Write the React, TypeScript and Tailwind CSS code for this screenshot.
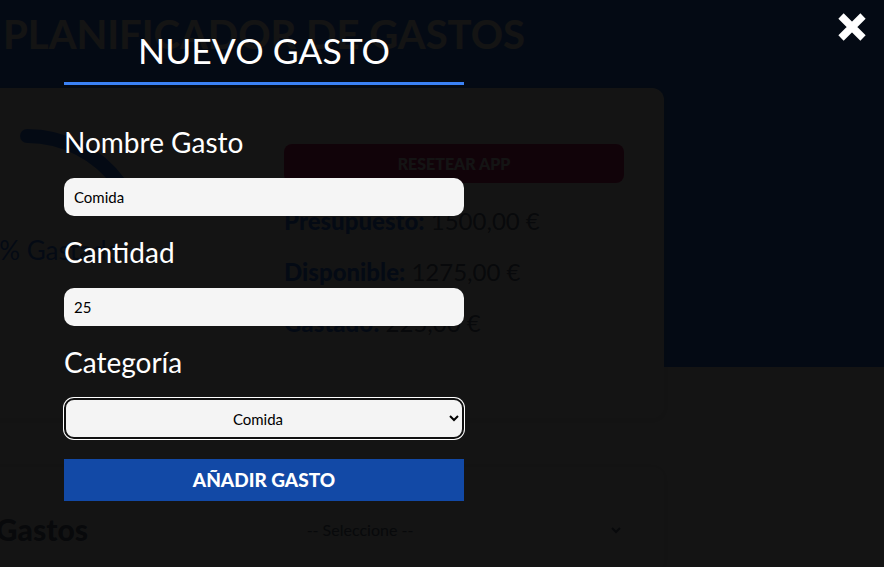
const resumen = [
  { label: 'Presupuesto:', value: '1500,00 €' },
  { label: 'Disponible:', value: '1275,00 €' },
  { label: 'Gastado:', value: '225,00 €' },
];

function Progreso({ porcentaje }: { porcentaje: number }) {
  const r = 114;
  const circ = 2 * Math.PI * r;
  return (
    <div className="grid h-[254px] w-[254px] place-items-center">
      <svg width="254" height="254" viewBox="0 0 254 254" className="[grid-area:1/1]">
        <circle cx="127" cy="127" r={r} fill="none" stroke="#f5f5f5" strokeWidth="14" />
        <circle
          cx="127"
          cy="127"
          r={r}
          fill="none"
          stroke="#3b82f6"
          strokeWidth="14"
          strokeLinecap="round"
          strokeDasharray={`${(circ * porcentaje) / 100} ${circ}`}
          transform="rotate(-90 127 127)"
        />
      </svg>
      <span className="whitespace-nowrap text-[26px] text-[#3b82f6] [grid-area:1/1]">
        {porcentaje.toFixed(2)}% Gastado
      </span>
    </div>
  );
}

function Campo({ label, children }: { label: string; children: React.ReactNode }) {
  return (
    <div className="mb-[20px] flex flex-col gap-[20px]">
      <label className="text-[28px] leading-[32px] text-white">{label}</label>
      {children}
    </div>
  );
}

export default function App() {
  return (
    <div className="relative h-[567px] w-[884px] overflow-hidden bg-[#f5f5f5] font-[Lato,'Noto_Sans',sans-serif]">
      <header className="h-[367px] bg-[#3b82f6] pt-[10px]">
        <h1 className="w-[528px] text-center text-[40px] font-bold leading-[48px] text-white">
          PLANIFICADOR DE GASTOS
        </h1>

        <div className="-ml-[100px] mt-[30px] grid h-[330px] w-[764px] grid-cols-[254px_1fr] items-start gap-x-[130px] rounded-xl bg-white pr-[40px] pt-[35px] shadow-[0_1px_6px_rgba(0,0,0,0.08)]">
          <Progreso porcentaje={15} />

          <div className="flex flex-col pt-[21px]">
            <button className="mb-[12px] h-[39px] rounded-lg bg-[#db2777] text-[16px] font-black uppercase text-white">
              Resetear App
            </button>
            {resumen.map((r) => (
              <p key={r.label} className="text-[24px] leading-[51px] text-[#64748b]">
                <span className="font-black text-[#3b82f6]">{r.label}</span> {r.value}
              </p>
            ))}
          </div>
        </div>
      </header>

      <div className="-ml-[150px] mt-[100px] flex w-[814px] items-center gap-[20px] rounded-xl bg-white pb-[20px] pr-[40px] pt-[40px] shadow-[0_1px_6px_rgba(0,0,0,0.06)]">
        <label className="w-[238px] shrink-0 text-right text-[30px] font-black text-[#64748b]">
          Filtrar Gastos
        </label>
        <select className="h-[40px] flex-1 rounded-lg bg-[#f5f5f5] text-center text-[16px] text-[#64748b]">
          <option>-- Seleccione --</option>
        </select>
      </div>

      <div className="absolute inset-0 bg-black/[0.92]">
        <button className="absolute right-[17px] top-[12px] text-white">
          <svg width="30" height="30" viewBox="0 0 30 30">
            <path d="M4 4 L26 26 M26 4 L4 26" stroke="#fff" strokeWidth="7.5" />
          </svg>
        </button>

        <form className="ml-[64px] w-[400px] pt-[30px]">
          <div className="mb-[41px] border-b-[3px] border-[#3b82f6] pb-[10px] text-center text-[35.5px] leading-[42px] text-white">
            NUEVO GASTO
          </div>

          <Campo label="Nombre Gasto">
            <input
              defaultValue="Comida"
              className="h-[38px] rounded-[10px] bg-[#f5f5f5] px-[10px] text-[15px] text-black outline-none"
            />
          </Campo>
          <Campo label="Cantidad">
            <input
              defaultValue="25"
              className="h-[38px] rounded-[10px] bg-[#f5f5f5] px-[10px] text-[15px] text-black outline-none"
            />
          </Campo>
          <Campo label="Categoría">
            <select className="h-[41px] w-full rounded-[10px] border-2 border-[#101010] bg-[#f4f4f4] text-center text-[15px] text-black shadow-[0_0_0_1px_#fff]">
              <option>Comida</option>
            </select>
          </Campo>

          <button
            type="button"
            className="h-[42px] w-full bg-[#1249a6] text-[19px] font-black uppercase text-white"
          >
            Añadir Gasto
          </button>
        </form>
      </div>
    </div>
  );
}
